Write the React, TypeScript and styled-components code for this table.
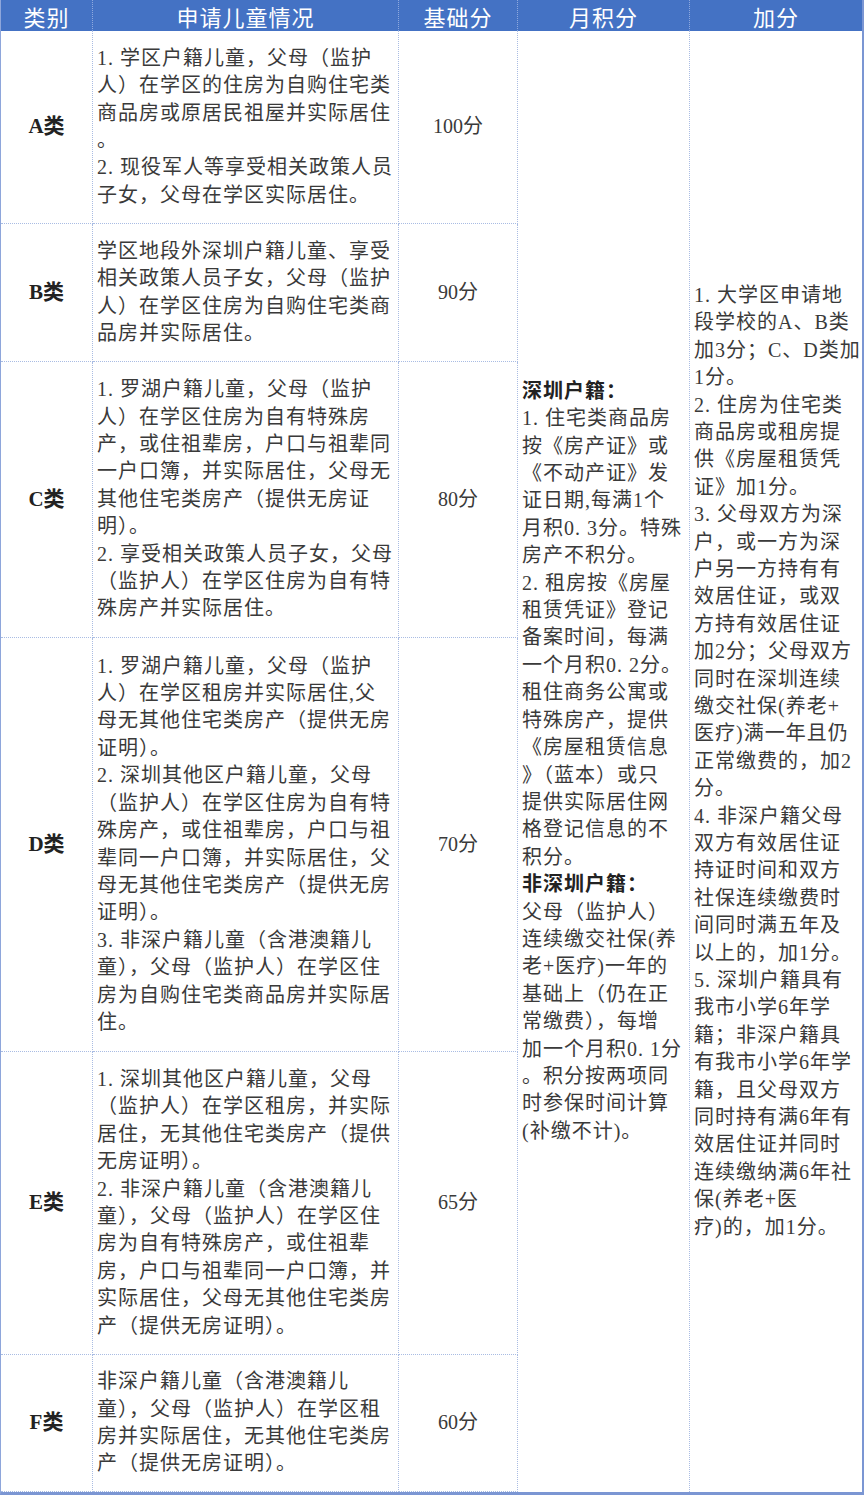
import styled, { createGlobalStyle } from "styled-components";

const GlobalStyle = createGlobalStyle`
  html, body {
    margin: 0;
    padding: 0;
    background: #ffffff;
  }
  body {
    font-family: "Liberation Serif", "Noto Sans CJK SC", serif;
    color: #3a3a3a;
  }
`

const Table = styled.div`
  display: grid;
  grid-template-columns: 92px 306px 119px 172px 172px;
  grid-template-rows: 31px 193px 138px 276px 414px 303px 137px;
  width: 864px;
  box-sizing: border-box;
  border-left: 1px solid #8ea6db;
  border-right: 2px solid #7b96d3;
  border-bottom: 3px solid #7b96d3;
`

const HeadCell = styled.div<{ $last?: boolean }>`
  display: flex;
  align-items: center;
  justify-content: center;
  background-color: #4472c4;
  color: #ffffff;
  font-size: 22px;
  letter-spacing: 1px;
  border-right: ${props => (props.$last ? "none" : "1px dotted #8fa9de")};
`

const Cell = styled.div<{ $last?: boolean; $span?: boolean }>`
  display: flex;
  flex-direction: column;
  justify-content: center;
  box-sizing: border-box;
  padding: 0 4px;
  font-size: 20px;
  line-height: 27.4px;
  letter-spacing: 1px;
  border-right: ${props => (props.$last ? "none" : "1px dotted #a9bce3")};
  border-bottom: ${props => (props.$span ? "none" : "1px dotted #a9bce3")};
  grid-row: ${props => (props.$span ? "2 / 8" : "auto")};
`

const Category = styled(Cell)`
  align-items: center;
  font-size: 21px;
  font-weight: 700;
  color: #222222;
  letter-spacing: 0;
`

const Score = styled(Cell)`
  align-items: center;
  letter-spacing: 0;
`

const Line = styled.span<{ $bold?: boolean }>`
  display: block;
  white-space: nowrap;
  font-weight: ${props => (props.$bold ? 700 : 400)};
  color: ${props => (props.$bold ? "#222222" : "inherit")};
`

type Row = { cat: string; score: string; lines: string[] };

const rows: Row[] = [
  {
    cat: "A类",
    score: "100分",
    lines: [
      "1. 学区户籍儿童，父母（监护",
      "人）在学区的住房为自购住宅类",
      "商品房或原居民祖屋并实际居住",
      "。",
      "2. 现役军人等享受相关政策人员",
      "子女，父母在学区实际居住。",
    ],
  },
  {
    cat: "B类",
    score: "90分",
    lines: [
      "学区地段外深圳户籍儿童、享受",
      "相关政策人员子女，父母（监护",
      "人）在学区住房为自购住宅类商",
      "品房并实际居住。",
    ],
  },
  {
    cat: "C类",
    score: "80分",
    lines: [
      "1. 罗湖户籍儿童，父母（监护",
      "人）在学区住房为自有特殊房",
      "产，或住祖辈房，户口与祖辈同",
      "一户口簿，并实际居住，父母无",
      "其他住宅类房产（提供无房证",
      "明）。",
      "2. 享受相关政策人员子女，父母",
      "（监护人）在学区住房为自有特",
      "殊房产并实际居住。",
    ],
  },
  {
    cat: "D类",
    score: "70分",
    lines: [
      "1. 罗湖户籍儿童，父母（监护",
      "人）在学区租房并实际居住,父",
      "母无其他住宅类房产（提供无房",
      "证明）。",
      "2. 深圳其他区户籍儿童，父母",
      "（监护人）在学区住房为自有特",
      "殊房产，或住祖辈房，户口与祖",
      "辈同一户口簿，并实际居住，父",
      "母无其他住宅类房产（提供无房",
      "证明）。",
      "3. 非深户籍儿童（含港澳籍儿",
      "童），父母（监护人）在学区住",
      "房为自购住宅类商品房并实际居",
      "住。",
    ],
  },
  {
    cat: "E类",
    score: "65分",
    lines: [
      "1. 深圳其他区户籍儿童，父母",
      "（监护人）在学区租房，并实际",
      "居住，无其他住宅类房产（提供",
      "无房证明）。",
      "2. 非深户籍儿童（含港澳籍儿",
      "童），父母（监护人）在学区住",
      "房为自有特殊房产，或住祖辈",
      "房，户口与祖辈同一户口簿，并",
      "实际居住，父母无其他住宅类房",
      "产（提供无房证明）。",
    ],
  },
  {
    cat: "F类",
    score: "60分",
    lines: [
      "非深户籍儿童（含港澳籍儿",
      "童），父母（监护人）在学区租",
      "房并实际居住，无其他住宅类房",
      "产（提供无房证明）。",
    ],
  },
];

// lines starting with "**" are the bold sub-headings
const monthly = [
  "**深圳户籍：",
  "1. 住宅类商品房",
  "按《房产证》或",
  "《不动产证》发",
  "证日期,每满1个",
  "月积0. 3分。特殊",
  "房产不积分。",
  "2. 租房按《房屋",
  "租赁凭证》登记",
  "备案时间，每满",
  "一个月积0. 2分。",
  "租住商务公寓或",
  "特殊房产，提供",
  "《房屋租赁信息",
  "》（蓝本）或只",
  "提供实际居住网",
  "格登记信息的不",
  "积分。",
  "**非深圳户籍：",
  "父母（监护人）",
  "连续缴交社保(养",
  "老+医疗)一年的",
  "基础上（仍在正",
  "常缴费），每增",
  "加一个月积0. 1分",
  "。积分按两项同",
  "时参保时间计算",
  "(补缴不计)。",
];

const bonus = [
  "1. 大学区申请地",
  "段学校的A、B类",
  "加3分；C、D类加",
  "1分。",
  "2. 住房为住宅类",
  "商品房或租房提",
  "供《房屋租赁凭",
  "证》加1分。",
  "3. 父母双方为深",
  "户，或一方为深",
  "户另一方持有有",
  "效居住证，或双",
  "方持有效居住证",
  "加2分；父母双方",
  "同时在深圳连续",
  "缴交社保(养老+",
  "医疗)满一年且仍",
  "正常缴费的，加2",
  "分。",
  "4. 非深户籍父母",
  "双方有效居住证",
  "持证时间和双方",
  "社保连续缴费时",
  "间同时满五年及",
  "以上的，加1分。",
  "5. 深圳户籍具有",
  "我市小学6年学",
  "籍；非深户籍具",
  "有我市小学6年学",
  "籍，且父母双方",
  "同时持有满6年有",
  "效居住证并同时",
  "连续缴纳满6年社",
  "保(养老+医",
  "疗)的，加1分。",
];

function Lines({ items }: { items: string[] }) {
  return (
    <>
      {items.map((t, i) =>
        t.startsWith("**") ? (
          <Line key={i} $bold>{t.slice(2)}</Line>
        ) : (
          <Line key={i}>{t}</Line>
        )
      )}
    </>
  );
}

export default function App() {
  return (
    <>
      <GlobalStyle />
      <Table>
        <HeadCell>类别</HeadCell>
        <HeadCell>申请儿童情况</HeadCell>
        <HeadCell>基础分</HeadCell>
        <HeadCell>月积分</HeadCell>
        <HeadCell $last>加分</HeadCell>

        {rows.map((r, i) => (
          <RowCells key={r.cat} row={r} first={i === 0} />
        ))}
      </Table>
    </>
  );
}

function RowCells({ row, first }: { row: Row; first: boolean }) {
  return (
    <>
      <Category style={{ gridColumn: 1 }}>{row.cat}</Category>
      <Cell style={{ gridColumn: 2 }}>
        <Lines items={row.lines} />
      </Cell>
      <Score style={{ gridColumn: 3 }}>{row.score}</Score>
      {first && (
        <>
          <Cell $span style={{ gridColumn: 4 }}>
            <Lines items={monthly} />
          </Cell>
          <Cell $span $last style={{ gridColumn: 5 }}>
            <Lines items={bonus} />
          </Cell>
        </>
      )}
    </>
  );
}
